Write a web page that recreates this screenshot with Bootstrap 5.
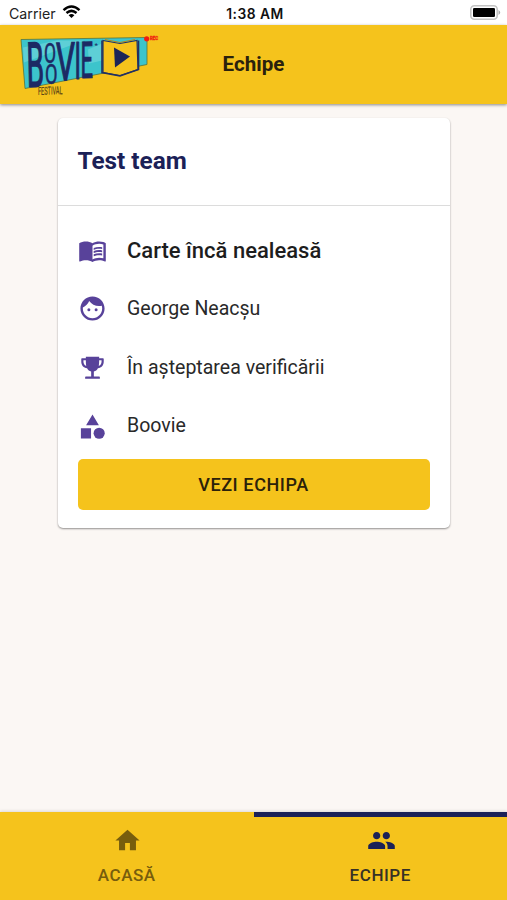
<!DOCTYPE html>
<html lang="ro">
<head>
<meta charset="utf-8">
<meta name="viewport" content="width=device-width, initial-scale=1">
<title>Echipe</title>
<link href="https://cdn.jsdelivr.net/npm/bootstrap@5.3.0/dist/css/bootstrap.min.css" rel="stylesheet">
<style>
body{font-family:Roboto,"Liberation Sans",sans-serif;background:#fbf7f4;color:#212121;height:900px;overflow:hidden}
svg{display:block;flex:none;overflow:visible}
.statusbar{height:25px;font:14.2px/26px Inter,"Liberation Sans",sans-serif;padding:0 6px 0 9px;color:#222}
.statusbar>div{flex:1 0 0}
.clock{font-weight:600;font-size:13.8px;letter-spacing:.5px;color:#111;padding-top:2px}
.carrier{padding-top:2px;gap:6px}
.topbar{height:78.5px;background:#f5c31c;box-shadow:0 1px 3px rgba(0,0,0,.45);padding:0 16px}
.topbar>div{flex:1 0 0;min-width:0}
.page-title{font-size:20.6px;font-weight:700;line-height:24px;color:#2a210d}
.team{width:392px;margin-top:14.5px;border:0;border-radius:5px;box-shadow:0 1px 2px rgba(0,0,0,.42)}
.team-head{height:88px;padding:0 20px 1px;border-bottom:1px solid #dcdcdc}
.team-head h2{font-size:24.3px;font-weight:700;color:#1b2157;line-height:30px}
.team-body{padding:15px 20px 18px}
.team-row{height:58.6px;font-size:19.55px;gap:20.500px;color:#292929}
.team-row svg{fill:#58429a}
.book-row{font-size:22px;font-weight:500;color:#1d1d1d}
.btn-team{height:51px;margin-top:3.200px;border-radius:5px;background:#f5c31c;color:#2b210a;font-size:18px;font-weight:500;letter-spacing:.6px}
.btn-team:hover{background:#eab911}
.tabs{height:88px;background:#f5c31c;box-shadow:0 -1px 3px rgba(0,0,0,.12)}
.tab-item{flex:1 0 0;border-top:5px solid transparent;padding-top:9px;font-size:17px;font-weight:500;letter-spacing:.55px;line-height:22px;color:#775d0d;text-decoration:none}
.tab-item svg{fill:currentColor;margin:0 0 9px 2px}
.tab-item.active{border-color:#1b2157;color:#363126}
.tab-item.active svg{fill:#1b2157}
</style>
<script src="https://cdn.jsdelivr.net/npm/bootstrap@5.3.0/dist/js/bootstrap.bundle.min.js"></script>
</head>
<body class="d-flex flex-column">
<div class="statusbar bg-white d-flex align-items-center">
  <div class="carrier d-flex align-items-center"><span>Carrier</span>
    <svg class="mb-1" width="19" height="16" viewBox="0 0 20 16" fill="none" stroke="#000" stroke-width="2.6"><path d="M1.600 6Q10-1.400 18.400 6M4.700 9.100Q10 4.500 15.300 9.100"/><path d="M7 11.300q3-2.400 6 0l-3 3z" fill="#000" stroke="none"/></svg>
  </div>
  <span class="clock">1:38 AM</span>
  <div class="d-flex justify-content-end">
    <svg width="31" height="15" viewBox="0 0 31 15"><rect x=".8" y=".8" width="26.400" height="13.400" rx="3.500" fill="#fff" stroke="#c3c3c3" stroke-width="1.600"/><rect x="3" y="2.900" width="22" height="9.200" rx="1.300"/><path d="M28.500 5q3.500 2.500 0 5z" fill="#aaa"/></svg>
  </div>
</div>
<header class="topbar d-flex align-items-center position-relative">
  <div>
    <svg width="146" height="66" viewBox="16 31.500 146 66" role="img" aria-label="Boovie Festival">
      <path d="M21 40L147 38V65L112 72 25 89z" fill="#3cc4cc" stroke="#56733e" stroke-width=".8"/>
      <path d="M23 48l34-7h27L24 63zM88 50l14-6v17l-13 3z" fill="#74d7dc" opacity=".6"/>
      <path d="M103 41l17 3 17-3 1 29-18 6-17-3z" fill="#f5c31c" stroke="#223062" stroke-width="1.200"/>
      <path d="M102 41v32l18 3.500L138.500 70V41" fill="none" stroke="#223062" stroke-width="1.600"/>
      <path d="M105 40l15 3 15-3" fill="none" stroke="#b68716" stroke-width="1"/>
      <path d="M114 48l16 9-15 11z" fill="#1c2558"/>
      <g fill="#1c2964" stroke="#1c2964" font-family="Roboto,sans-serif">
        <text transform="matrix(1 -.02 .06 2.600 27 87.500)" font-size="24" stroke-width=".5" textLength="17.500" lengthAdjust="spacingAndGlyphs">B</text>
        <text transform="matrix(1 0 0 1.900 44 63.500)" font-size="14.500" stroke-width=".3" textLength="12" lengthAdjust="spacingAndGlyphs">O</text>
        <text transform="matrix(1 0 0 1.900 45 84)" font-size="14.500" stroke-width=".3" textLength="12.500" lengthAdjust="spacingAndGlyphs">O</text>
        <text transform="matrix(1 -.03 0 2.200 56 81)" font-size="24" stroke-width=".6" textLength="19" lengthAdjust="spacingAndGlyphs">V</text>
        <text transform="matrix(1 -.03 0 2.200 74.500 79.500)" font-size="23.500" stroke-width=".6">I</text>
        <text transform="matrix(1 -.03 0 2.200 80.500 78.500)" font-size="23" stroke-width=".5" textLength="12.500" lengthAdjust="spacingAndGlyphs">E</text>
        <text x="94.500" y="48" font-size="8" stroke="none">*</text>
        <text transform="matrix(1 -.04 0 1 38 95.500)" font-size="11" fill="#5b4615" stroke="#5b4615" stroke-width=".2" textLength="24.500" lengthAdjust="spacingAndGlyphs">FESTIVAL</text>
      </g>
      <circle cx="146.700" cy="39.300" r="2.600" fill="#f01c10"/>
      <text x="150" y="40.700" font-family="Roboto,sans-serif" font-size="4.800" font-weight="900" fill="#f02a10" stroke="#f02a10" stroke-width=".35" textLength="8" lengthAdjust="spacingAndGlyphs">REC</text>
    </svg>
  </div>
  <h1 class="page-title mb-0">Echipe</h1>
  <div></div>
</header>
<main class="flex-grow-1">
  <section class="card team mx-auto">
    <div class="team-head d-flex align-items-center"><h2 class="mb-0">Test team</h2></div>
    <div class="team-body">
      <div class="team-row book-row d-flex align-items-center">
        <svg width="29" height="29" viewBox="0 0 24 24"><path d="M21 5c-1.110-.35-2.330-.5-3.500-.5-1.950 0-4.050.4-5.500 1.500-1.450-1.100-3.550-1.500-5.500-1.500S2.450 4.900 1 6v14.650c0 .25.25.5.5.5.1 0 .15-.05.25-.05C3.100 20.450 5.050 20 6.500 20c1.950 0 4.050.4 5.500 1.500 1.350-.85 3.800-1.500 5.500-1.500 1.650 0 3.350.3 4.750 1.050.1.05.15.05.25.05.25 0 .5-.25.5-.5V6c-.6-.45-1.250-.75-2-1zm0 13.500c-1.100-.35-2.300-.5-3.500-.5-1.700 0-4.150.65-5.500 1.500V8c1.350-.85 3.800-1.500 5.500-1.500 1.200 0 2.400.15 3.500.5v11.500z"/><path d="M17.500 10.500c.88 0 1.730.09 2.500.26V9.240c-.79-.15-1.640-.24-2.500-.24-1.700 0-3.240.29-4.500.83v1.660c1.130-.64 2.700-.99 4.500-.99zM13 12.490v1.660c1.130-.64 2.700-.99 4.500-.99.88 0 1.730.09 2.500.26V11.900c-.79-.15-1.640-.24-2.500-.24-1.700 0-3.240.3-4.500.83zM17.500 14.330c-1.700 0-3.240.29-4.500.83v1.660c1.130-.64 2.700-.99 4.500-.99.88 0 1.730.09 2.500.26v-1.520c-.79-.16-1.640-.24-2.500-.24z"/></svg>
        <span>Carte încă nealeasă</span>
      </div>
      <div class="team-row d-flex align-items-center">
        <svg width="29" height="29" viewBox="0 0 24 24"><path d="M9 11.750a1.250 1.250 0 1 0 0 2.500 1.250 1.250 0 0 0 0-2.500zm6 0a1.250 1.250 0 1 0 0 2.500 1.250 1.250 0 0 0 0-2.500zM12 2C6.480 2 2 6.480 2 12s4.480 10 10 10 10-4.480 10-10S17.520 2 12 2zm0 18c-4.410 0-8-3.590-8-8 0-.29.02-.58.05-.86 2.360-1.050 4.230-2.980 5.210-5.370C11.070 8.330 14.050 10 17.420 10c.78 0 1.530-.09 2.250-.26.21.71.33 1.470.33 2.260 0 4.410-3.590 8-8 8z"/></svg>
        <span>George Neacșu</span>
      </div>
      <div class="team-row d-flex align-items-center">
        <svg width="29" height="29" viewBox="0 0 24 24"><path fill-rule="evenodd" d="M6.500 3h11v1.300h3.200q.6 0 .6.600V7c0 3.200-1.900 5.200-4.800 5.600-.8 1.500-1.900 2.400-3.400 2.700v4.200h4.400q.6 0 .6.600v1.300H5.900v-1.300q0-.6.600-.6h4.400v-4.200c-1.500-.3-2.600-1.200-3.400-2.700C4.600 12.200 2.700 10.200 2.700 7V4.900q0-.6.600-.6h3.200zM4.500 6v1c0 1.900.8 3.200 2.300 3.700-.2-1-.3-2.900-.3-4.700zM17.500 6c0 1.800-.1 3.700-.3 4.700 1.500-.5 2.300-1.800 2.300-3.700V6z"/></svg>
        <span>În așteptarea verificării</span>
      </div>
      <div class="team-row d-flex align-items-center">
        <svg width="29" height="29" viewBox="0 0 24 24"><path d="M12 2l5.300 9H6.700zM2.400 13.500h8.400v8.400H2.400z"/><circle cx="17.500" cy="17.600" r="4.600"/></svg>
        <span>Boovie</span>
      </div>
      <button type="button" class="btn btn-team w-100 border-0 p-0">VEZI ECHIPA</button>
    </div>
  </section>
</main>
<nav class="tabs d-flex">
  <a href="#" class="tab-item d-flex flex-column align-items-center"><svg width="29" height="29" viewBox="0 0 24 24"><path d="M10 20v-6h4v6h5v-8h3L12 3 2 12h3v8z"/></svg>ACASĂ</a>
  <a href="#" class="tab-item active d-flex flex-column align-items-center" aria-current="page"><svg width="29" height="29" viewBox="0 0 24 24"><path d="M16 11c1.660 0 2.990-1.340 2.990-3S17.660 5 16 5s-3 1.340-3 3 1.340 3 3 3zm-8 0c1.660 0 2.990-1.340 2.990-3S9.660 5 8 5 5 6.340 5 8s1.340 3 3 3zm0 2c-2.330 0-7 1.170-7 3.500V19h14v-2.500C15 14.170 10.330 13 8 13zm8 0c-.29 0-.62.02-.97.05 1.160.84 1.970 1.970 1.970 3.450V19h6v-2.500c0-2.330-4.670-3.500-7-3.500z"/></svg>ECHIPE</a>
</nav>
</body>
</html>
